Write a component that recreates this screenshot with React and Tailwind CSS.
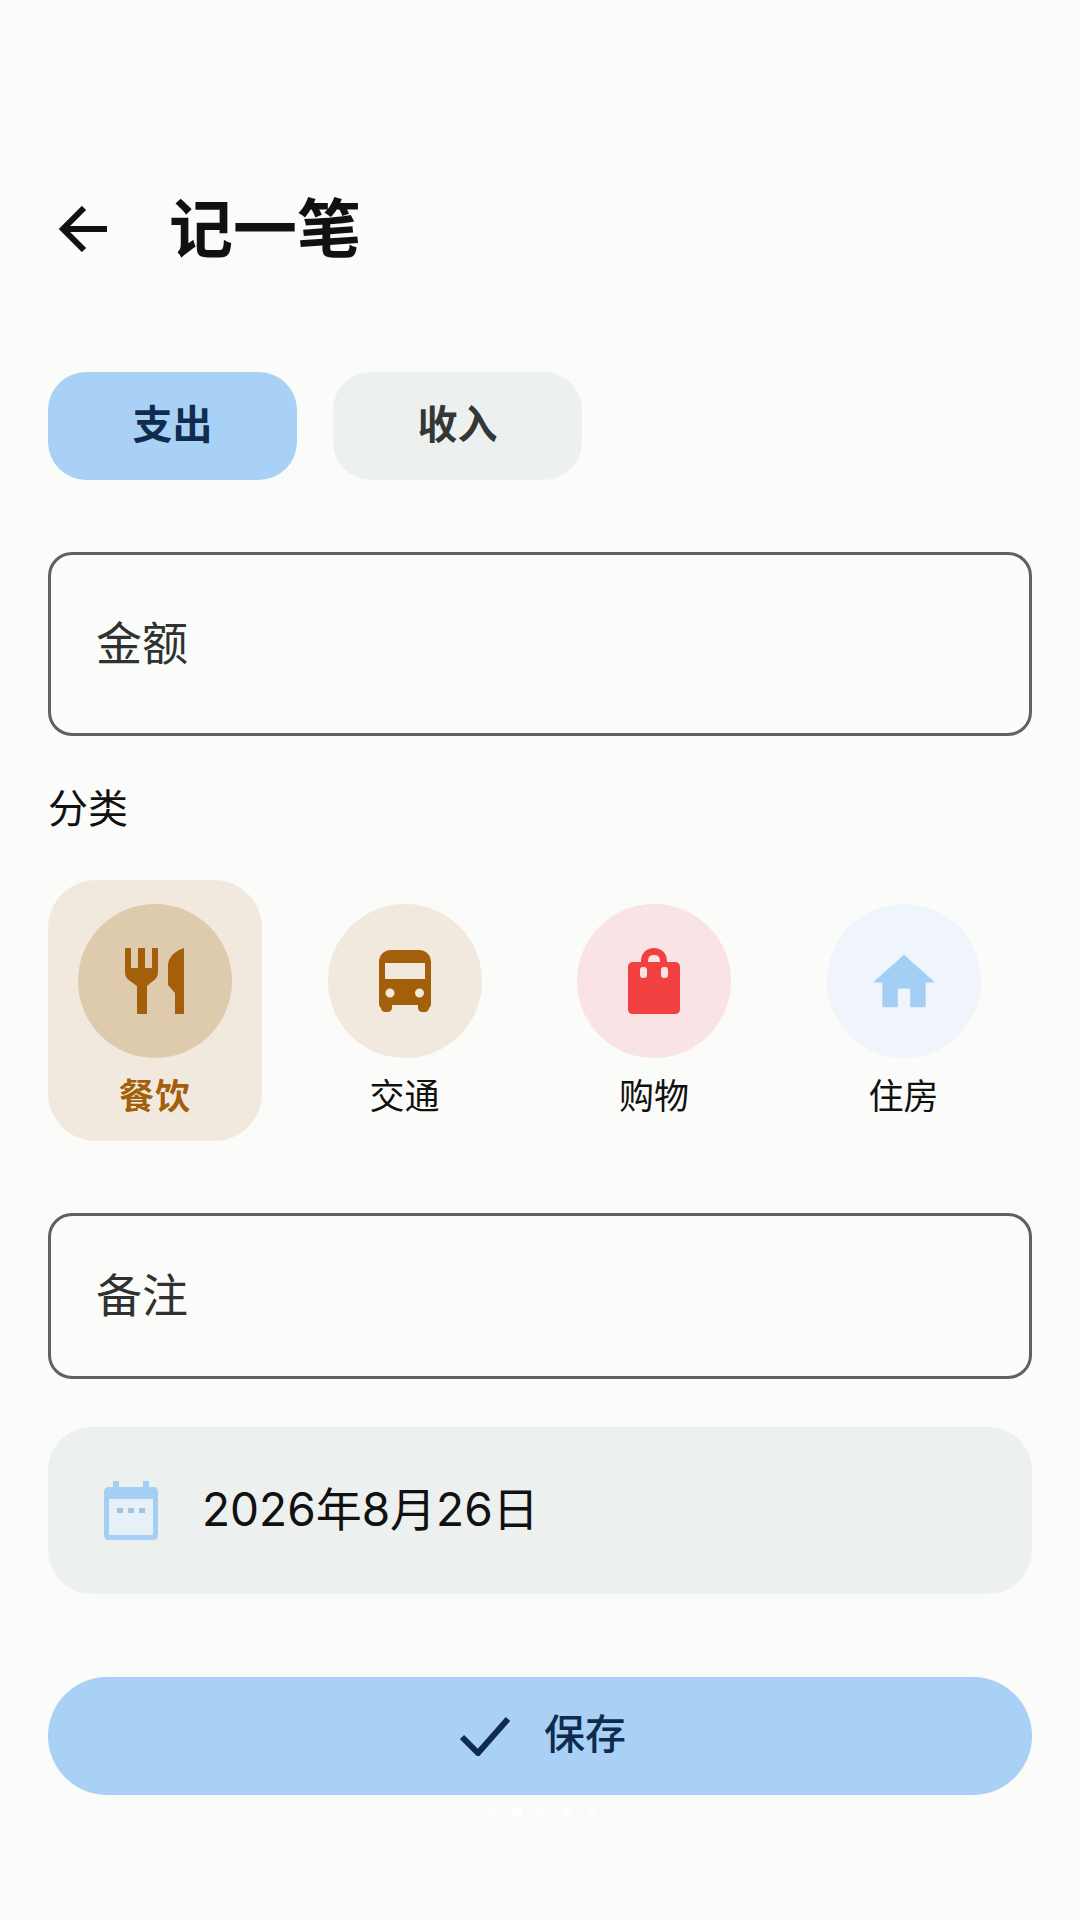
import React from "react";

const FONT = "font-['Roboto','Noto_Sans_CJK_SC',sans-serif]";

const RestaurantIcon = () => (
  <svg viewBox="0 0 60 66" className="w-[60px] h-[66px]" fill="#a35f0a">
    <path d="M0 0h6v20h7V0h7v20h7V0h6v24q0 6-5 9l-6 5v28H12V38l-7-5q-5-3-5-9z" />
    <path d="M59 0v66H50V45l-7-8V18C43 9 50 3 59 0z" />
  </svg>
);

const BusIcon = () => (
  <svg viewBox="0 0 52 62" className="w-[52px] h-[62px]" fill="#a35f0a" fillRule="evenodd">
    <path d="M12 0h28c7 0 12 5 12 12v42c0 2-1 3-2 4 0 2-2 4-4 4h-3c-2 0-4-2-4-4v-3H13v3c0 2-2 4-4 4H6c-2 0-4-2-4-4-1-1-2-2-2-4V12C0 5 5 0 12 0zM6 13v16h40V13zM11 38.500a4.500 4.500 0 1 0 0 9 4.500 4.500 0 1 0 0-9zM40.500 38.500a4.500 4.500 0 1 0 0 9 4.500 4.500 0 1 0 0-9z" />
  </svg>
);

const BagIcon = () => (
  <svg viewBox="0 0 52 66" className="w-[52px] h-[66px]" fill="#f04040" fillRule="evenodd">
    <path d="M13 14v-1C13 5 19 0 26 0s13 5 13 13v1h8c3 0 5 2 5 5v42c0 3-2 5-5 5H5c-3 0-5-2-5-5V19c0-3 2-5 5-5zm7 0h12v-1c0-4-2-6-6-6s-6 2-6 6z" />
    <rect x="12" y="19" width="7" height="11" rx="3" fill="#f9e3e4" />
    <rect x="33" y="19" width="7" height="11" rx="3" fill="#f9e3e4" />
  </svg>
);

const HomeIcon = () => (
  <svg viewBox="2 3 20 17" className="w-[62px] h-[54px]" fill="#a3cff5">
    <path d="M10 20v-6h4v6h5v-8h3L12 3 2 12h3v8z" />
  </svg>
);

const CalendarIcon = () => (
  <svg viewBox="0 0 54 59" className="w-[54px] h-[59px] shrink-0" fill="#a3cff5">
    <path d="M9 0h6v6h24V0h6v6h4c3 0 5 2 5 5v43c0 3-2 5-5 5H5c-3 0-5-2-5-5V11c0-3 2-5 5-5h4z" />
    <rect x="5" y="18" width="44" height="36" fill="#e6f0f8" />
    <rect x="13" y="27" width="6" height="5" fill="#a3c4de" />
    <rect x="24" y="27" width="6" height="5" fill="#a3c4de" />
    <rect x="35" y="27" width="6" height="5" fill="#a3c4de" />
  </svg>
);

const categories = [
  { name: "餐饮", icon: <RestaurantIcon />, circle: "bg-[#decbae]", selected: true },
  { name: "交通", icon: <BusIcon />, circle: "bg-[#f1e9de]" },
  { name: "购物", icon: <BagIcon />, circle: "bg-[#f9e3e4]" },
  { name: "住房", icon: <HomeIcon />, circle: "bg-[#eff5fb]" },
];

export default function App() {
  return (
    <div className={`h-[1920px] w-[1080px] overflow-hidden bg-[#fbfbf9] px-[48px] pt-[189px] text-[#111] ${FONT}`}>
      <header className="flex h-[80px] items-center">
        <svg viewBox="0 0 48 46" className="ml-[11px] w-[48px] h-[46px]" fill="none" stroke="#111" strokeWidth="6">
          <path d="M48 23H5" />
          <path d="M25 2L4 23l21 21" />
        </svg>
        <h1 className="ml-[62px] mt-[4px] text-[64px] leading-[80px] font-bold">记一笔</h1>
      </header>

      <div className="mt-[103px] flex gap-[36px]">
        <button className="h-[108px] w-[249px] rounded-[38px] bg-[#a8d1f5] text-[40px] font-bold text-[#0f2c4f]">支出</button>
        <button className="h-[108px] w-[249px] rounded-[38px] bg-[#ecf0ef] text-[40px] font-bold text-[#333836]">收入</button>
      </div>

      <div className="mt-[72px] flex h-[184px] items-center rounded-[24px] border-[3px] border-[#5a6361] pl-[45px] text-[46px] text-[#2e3331]">金额</div>

      <div className="mt-[44px] h-[60px] text-[40px] leading-[60px]">分类</div>

      <div className="mt-[40px] flex gap-[35.5px]">
        {categories.map((cat) => (
          <div
            key={cat.name}
            className={`flex h-[261px] w-[214px] flex-col items-center rounded-[48px] pt-[24px] ${cat.selected ? "bg-[#f1e9de]" : ""}`}
          >
            <div className={`flex h-[154px] w-[154px] items-center justify-center rounded-full ${cat.circle}`}>{cat.icon}</div>
            <span className={`mt-[15px] text-[35px] leading-[50px] ${cat.selected ? "font-bold tracking-[1px] text-[#a35f0a]" : ""}`}>{cat.name}</span>
          </div>
        ))}
      </div>

      <div className="mt-[72px] flex h-[166px] items-center rounded-[24px] border-[3px] border-[#5a6361] pl-[45px] text-[46px] text-[#2e3331]">备注</div>

      <div className="mt-[48px] flex h-[167px] items-center gap-[44px] rounded-[44px] bg-[#ecf0ef] pl-[56px]">
        <CalendarIcon />
        <span className="mb-[4px] font-['Inter','Noto_Sans_CJK_SC',sans-serif] text-[46px] leading-[60px]">2026年8月26日</span>
      </div>

      <button className="mt-[83px] flex h-[118px] w-full items-center justify-center gap-[34px] rounded-full bg-[#a8d1f5] pl-[6px] text-[41px] font-medium text-[#0f2c4f]">
        <svg viewBox="0 0 50 40" className="w-[50px] h-[40px]" fill="none" stroke="#0f2c4f" strokeWidth="6">
          <path d="M2 21l16 16L48 3" />
        </svg>
        保存
      </button>

      <div className="mt-[12px] flex justify-center gap-[15px] pl-[4px]">
        {[0, 1, 2, 3, 4].map((i) => (
          <span key={i} className={`h-[10px] w-[10px] rounded-full ${i === 1 ? "bg-white" : "bg-white/60"}`} />
        ))}
      </div>
    </div>
  );
}
